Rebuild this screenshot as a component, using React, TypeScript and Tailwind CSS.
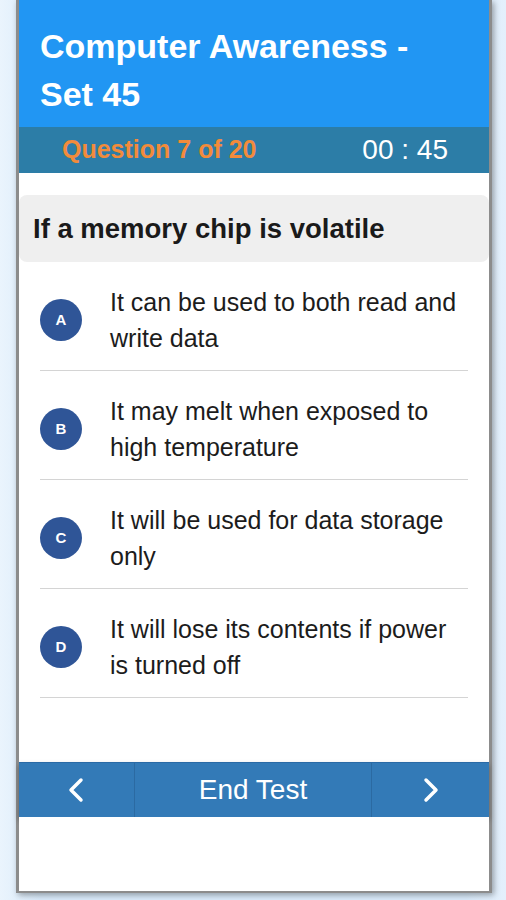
const options = [
  { key: 'A', text: 'It can be used to both read and write data' },
  { key: 'B', text: 'It may melt when exposed to high temperature' },
  { key: 'C', text: 'It will be used for data storage only' },
  { key: 'D', text: 'It will lose its contents if power is turned off' },
]

function Chevron({ dir }: { dir: 'left' | 'right' }) {
  return (
    <svg width="18" height="26" viewBox="0 0 18 26" fill="none">
      <polyline
        points={dir === 'left' ? '14,3 4,13 14,23' : '4,3 14,13 4,23'}
        stroke="white"
        strokeWidth="3.5"
        strokeLinecap="round"
        strokeLinejoin="round"
      />
    </svg>
  )
}

export default function App() {
  return (
    <div className="h-[900px] w-[506px] overflow-hidden bg-[linear-gradient(to_right,#eaf4fd,#d9eafa_8%,#d9eafa_92%,#e4f0fc)] pl-4 font-['Liberation_Sans',Arial,sans-serif]">
      <div className="flex h-[893px] w-[476px] flex-col border-x-[3px] border-b-[2px] border-[#8c8c8c] bg-white shadow-[2px_2px_6px_rgba(0,0,0,0.35)]">
        {/* Header */}
        <div className="bg-[#2196f3] px-[21px] pt-[22px] pb-[9px]">
          <h1 className="text-[34px] font-bold leading-[48px] text-white">
            Computer Awareness -<br />
            Set 45
          </h1>
        </div>

        {/* Progress bar */}
        <div className="flex h-[46px] items-center justify-between bg-[#2c7da7] pl-[43px] pr-[41px]">
          <span className="text-[25px] font-bold text-[#f28b3b]">Question 7 of 20</span>
          <span className="text-[28px] text-white">00 : 45</span>
        </div>

        {/* Body */}
        <div className="flex flex-1 flex-col pt-[22px]">
          <div className="flex h-[67px] items-center rounded-[8px] bg-[#efefef] px-[14px]">
            <p className="text-[27.5px] font-bold text-[#1a1a1a]">If a memory chip is volatile</p>
          </div>

          <div className="px-[21px]">
            {options.map((o) => (
              <div
                key={o.key}
                className="flex items-center gap-[28px] border-b border-[#d4d4d4] pt-[22px] pb-[14px]"
              >
                <div className="flex h-[42px] w-[42px] shrink-0 items-center justify-center rounded-full bg-[#2f5597] text-[15px] font-bold text-white">
                  {o.key}
                </div>
                <p className="text-[25px] leading-[36px] text-[#1c1c1c]">{o.text}</p>
              </div>
            ))}
          </div>
        </div>

        {/* Footer nav */}
        <div className="flex h-[55px] border-t border-[#2a6aa6] bg-[#337ab7] text-white shadow-[0_3px_5px_rgba(0,0,0,0.35)]">
          <button className="flex w-[116px] items-center justify-center border-r border-[#2b6aa2] pr-[2px]">
            <Chevron dir="left" />
          </button>
          <button className="flex flex-1 items-center justify-center border-r border-[#2b6aa2] text-[28px]">
            End Test
          </button>
          <button className="flex w-[117px] items-center justify-center">
            <Chevron dir="right" />
          </button>
        </div>

        <div className="h-[74px] bg-white" />
      </div>
    </div>
  )
}
